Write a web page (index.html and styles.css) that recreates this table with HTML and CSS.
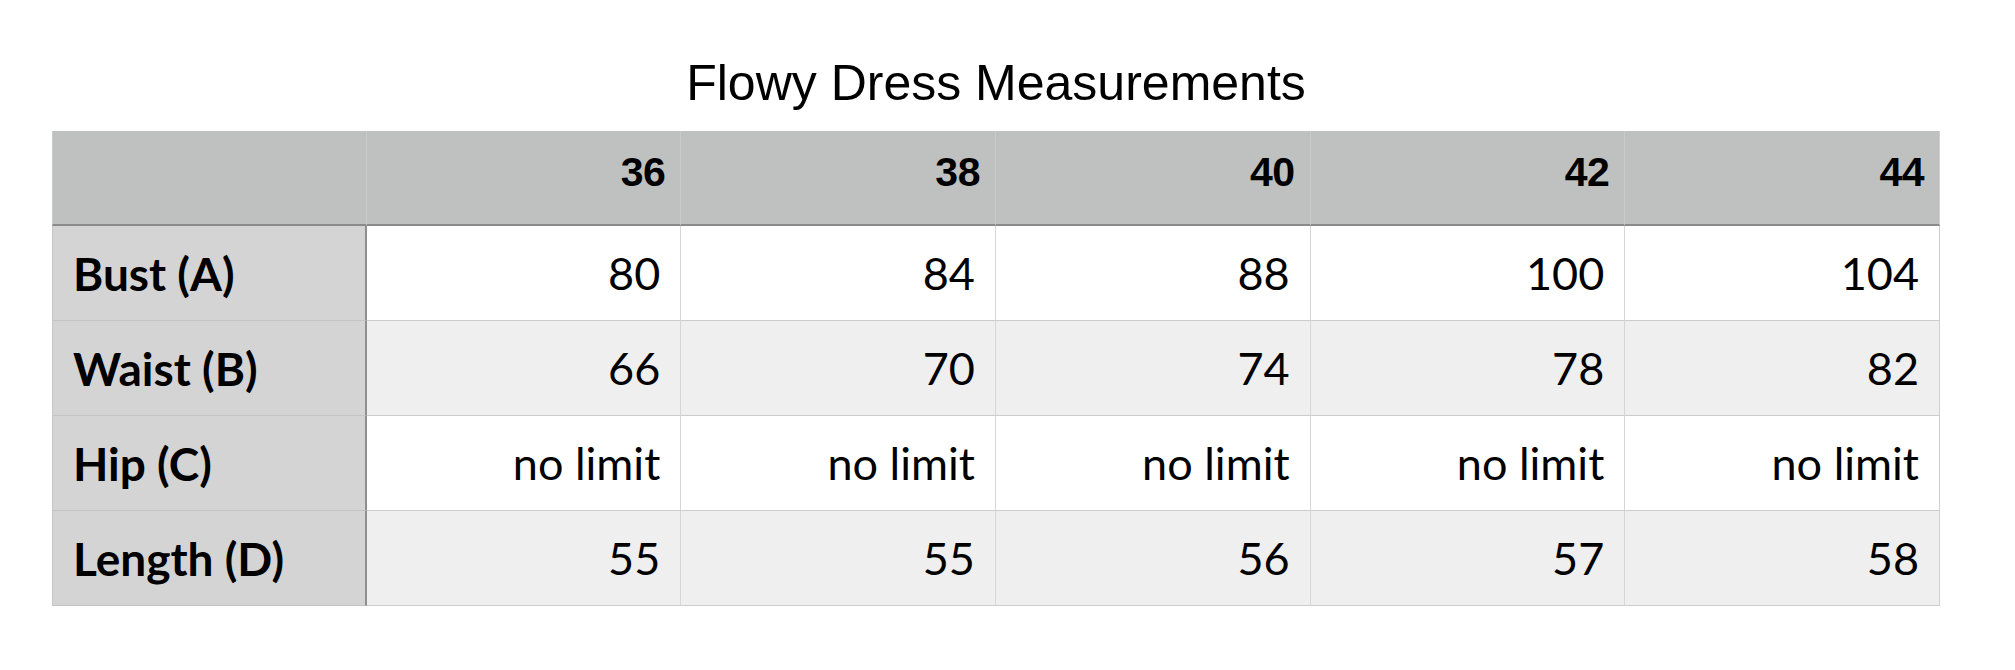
FILE: index.html
```html
<!DOCTYPE html>
<html lang="en">
<head>
<meta charset="utf-8">
<title>Flowy Dress Measurements</title>
<link rel="stylesheet" href="styles.css">
</head>
<body>
<div class="sheet">
  <h1 class="title">Flowy Dress Measurements</h1>
  <table class="sizes">
    <thead>
      <tr>
        <th class="corner"></th>
        <th>36</th>
        <th>38</th>
        <th>40</th>
        <th>42</th>
        <th>44</th>
      </tr>
    </thead>
    <tbody>
      <tr>
        <th class="label">Bust (A)</th>
        <td>80</td><td>84</td><td>88</td><td>100</td><td>104</td>
      </tr>
      <tr class="alt">
        <th class="label">Waist (B)</th>
        <td>66</td><td>70</td><td>74</td><td>78</td><td>82</td>
      </tr>
      <tr>
        <th class="label">Hip (C)</th>
        <td>no limit</td><td>no limit</td><td>no limit</td><td>no limit</td><td>no limit</td>
      </tr>
      <tr class="alt">
        <th class="label">Length (D)</th>
        <td>55</td><td>55</td><td>56</td><td>57</td><td>58</td>
      </tr>
    </tbody>
  </table>
</div>
</body>
</html>
```

FILE: styles.css
```css
html, body {
  margin: 0;
  padding: 0;
  background: #ffffff;
}

.sheet {
  padding: 54px 0 0 52px;
  width: 1888px;
}

.title {
  margin: 0 0 19px 0;
  font-family: "Liberation Sans", Arial, sans-serif;
  font-weight: normal;
  font-size: 50px;
  line-height: 58px;
  text-align: center;
  color: #000;
}

.sizes {
  width: 1888px;
  table-layout: fixed;
  border-collapse: separate;
  border-spacing: 0;
  color: #000;
}

.sizes thead th {
  height: 83px;
  padding: 0 15px 10px 0;
  background: #bfc1c0;
  border-bottom: 2px solid #8a8a8a;
  border-right: 1px solid #c9cbca;
  text-align: right;
  vertical-align: middle;
  font-family: "Liberation Sans", Arial, sans-serif;
  font-weight: bold;
  font-size: 41px;
  letter-spacing: -0.5px;
}

.sizes thead th.corner {
  border-left: 1px solid #c9cbca;
}

.sizes thead th:last-child,
.sizes tbody td:last-child {
  border-right: 1px solid #cfcfcf;
}

.sizes tbody td,
.sizes tbody th {
  height: 94px;
  padding: 0 20px 0 0;
  border-bottom: 1px solid #cdcdcd;
  border-right: 1px solid #d6d6d6;
  vertical-align: middle;
  font-family: Lato, "Open Sans", sans-serif;
  font-size: 45px;
  text-align: right;
  background: #ffffff;
}

.sizes tbody tr.alt td {
  background: #efefef;
}

.sizes tbody th.label {
  padding: 0 0 0 20px;
  text-align: left;
  font-weight: bold;
  font-size: 46px;
  background: #d5d4d5;
  border-left: 1px solid #c6c6c6;
  border-right: 2px solid #8f8f8f;
  border-bottom-color: #c4c4c4;
}
```
